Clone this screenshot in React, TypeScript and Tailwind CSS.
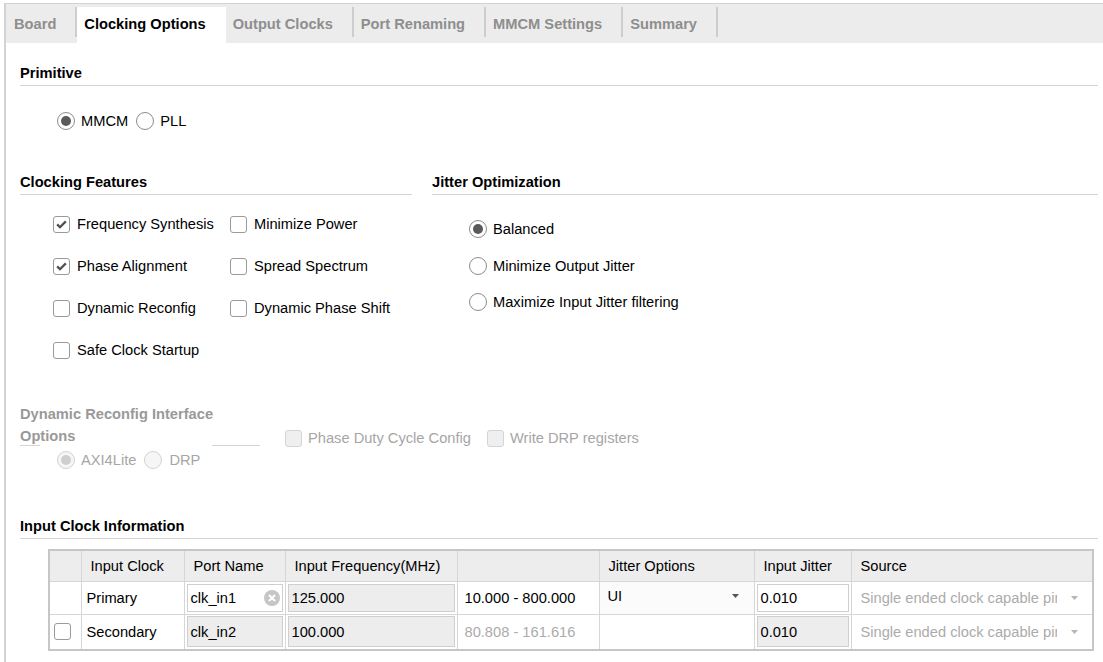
import React from "react";

const tabs = [
	{ label: "Board", active: false },
	{ label: "Clocking Options", active: true },
	{ label: "Output Clocks", active: false },
	{ label: "Port Renaming", active: false },
	{ label: "MMCM Settings", active: false },
	{ label: "Summary", active: false },
];

const Radio = ({ checked, disabled }: { checked?: boolean; disabled?: boolean }) => (
	<span
		className={`flex h-[18px] w-[18px] shrink-0 items-center justify-center rounded-full border-[1.5px] ${
			disabled ? "border-[#d2d2d2] bg-[#f6f6f6]" : "border-[#8c8c8c] bg-white"
		}`}
	>
		{checked && (
			<span
				className={`h-[10px] w-[10px] rounded-full ${disabled ? "bg-[#cfcfcf]" : "bg-[#5a5a5a]"}`}
			/>
		)}
	</span>
);

const Checkbox = ({ checked, disabled }: { checked?: boolean; disabled?: boolean }) => (
	<span
		className={`flex h-[17px] w-[17px] shrink-0 items-center justify-center rounded-[3px] border-[1.5px] ${
			disabled ? "border-[#d4d4d4] bg-[#efefef]" : "border-[#9a9a9a] bg-white"
		}`}
	>
		{checked && (
			<svg width="11" height="9" viewBox="0 0 11 9">
				<path d="M1.2 4.4 L4 7.2 L9.8 1.4" fill="none" stroke="#4f4f4f" strokeWidth="2.3" />
			</svg>
		)}
	</span>
);

const Option = ({
	kind,
	label,
	checked,
	disabled,
	gap = "gap-[6px]",
}: {
	kind: "radio" | "check";
	label: string;
	checked?: boolean;
	disabled?: boolean;
	gap?: string;
}) => (
	<label className={`flex items-center ${gap} ${disabled ? "text-[#a6a6a6]" : "text-black"}`}>
		{kind === "radio" ? <Radio checked={checked} disabled={disabled} /> : <Checkbox checked={checked} disabled={disabled} />}
		<span className="whitespace-nowrap">{label}</span>
	</label>
);

const SectionHeader = ({ title, className = "" }: { title: string; className?: string }) => (
	<div className={`border-b border-[#d4d4d4] pb-[3px] font-bold leading-[18px] ${className}`}>{title}</div>
);

const Caret = ({ color = "#555" }: { color?: string }) => (
	<svg width="7" height="4" viewBox="0 0 7 4" className="shrink-0">
		<path d="M0 0 H7 L3.5 4 Z" fill={color} />
	</svg>
);

const ClearIcon = () => (
	<svg width="16" height="16" viewBox="0 0 16 16" className="shrink-0">
		<circle cx="8" cy="8" r="8" fill="#c6c6c6" />
		<path d="M5 5 L11 11 M11 5 L5 11" stroke="#fff" strokeWidth="2" />
	</svg>
);

const Field = ({
	value,
	editable,
	height,
	clear,
}: {
	value: string;
	editable?: boolean;
	height: string;
	clear?: boolean;
}) => (
	<div
		className={`flex ${height} items-center border border-[#cfcfcf] pl-[3px] pr-[2px] ${
			editable ? "bg-white" : "bg-[#ededed]"
		}`}
	>
		<span className="flex-1">{value}</span>
		{clear && <ClearIcon />}
	</div>
);

const SourceCell = () => (
	<td className="border border-[#d6d6d6] pl-[9px] text-[#ababab]">
		<div className="flex items-center">
			<span className="w-[196px] overflow-hidden whitespace-nowrap">Single ended clock capable pin</span>
			<span className="ml-[14px]">
				<Caret color="#b5b5b5" />
			</span>
		</div>
	</td>
);

export default function App() {
	return (
		<div className="h-[662px] overflow-hidden bg-white font-['Liberation_Sans',Arial,sans-serif] text-[14.67px] text-black">
			<div className="ml-[4px] mt-[3px] h-[700px] border-l-2 border-t border-[#d3d3d3]">
				{/* tab strip */}
				<div className="flex h-[39px] items-start bg-[#ececec] pl-[1px] pt-[3px]">
					{tabs.map((t) =>
						t.active ? (
							<div key={t.label} className="h-[36px] bg-white pl-[7px] pr-[20px] pt-[2px] font-bold leading-[31px] text-black">
								{t.label}
							</div>
						) : (
							<div
								key={t.label}
								className="h-[30px] border-r-2 border-[#cdcdcd] pl-[7px] pr-[19px] pt-[2px] font-bold leading-[31px] text-[#8e8e8e]"
							>
								{t.label}
							</div>
						),
					)}
				</div>

				<div className="pl-[14px] pr-[5px]">
					{/* Primitive */}
					<SectionHeader title="Primitive" className="mt-[21px]" />
					<div className="ml-[37px] mt-[26px] flex h-[18px] items-center gap-[8px]">
						<Option kind="radio" label="MMCM" checked />
						<Option kind="radio" label="PLL" />
					</div>

					{/* Features + Jitter */}
					<div className="mt-[43px] flex gap-[20px]">
						<div className="w-[392px]">
							<SectionHeader title="Clocking Features" />
							<div className="ml-[33px] mt-[8px] grid grid-cols-[177px_1fr]">
								{[
									["Frequency Synthesis", true, "Minimize Power"],
									["Phase Alignment", true, "Spread Spectrum"],
									["Dynamic Reconfig", false, "Dynamic Phase Shift"],
									["Safe Clock Startup", false, ""],
								].map(([a, on, b]) => (
									<React.Fragment key={a as string}>
										<div className="flex h-[42px] items-center">
											<Option kind="check" label={a as string} checked={on as boolean} gap="gap-[7px]" />
										</div>
										<div className="flex h-[42px] items-center">
											{b ? <Option kind="check" label={b as string} gap="gap-[7px]" /> : null}
										</div>
									</React.Fragment>
								))}
							</div>
						</div>
						<div className="flex-1">
							<SectionHeader title="Jitter Optimization" />
							<div className="ml-[37px] mt-[16px] flex flex-col">
								{["Balanced", "Minimize Output Jitter", "Maximize Input Jitter filtering"].map((l, i) => (
									<div key={l} className="flex h-[36.5px] items-center">
										<Option kind="radio" label={l} checked={i === 0} />
									</div>
								))}
							</div>
						</div>
					</div>

					{/* Dynamic reconfig interface */}
					<div className="mt-[32px] flex">
						<div className="w-[240px]">
							<div className="h-[41px] font-bold leading-[22px] text-[#999]">
								Dynamic Reconfig Interface
								<br />
								Options
							</div>
							<div className="mt-[1px] flex">
								<div className="w-[20px] border-t border-[#d4d4d4]" />
								<div className="ml-[172px] w-[48px] border-t border-[#d4d4d4]" />
							</div>
							<div className="ml-[37px] mt-[5px] flex h-[18px] items-center gap-[8px]">
								<Option kind="radio" label="AXI4Lite" checked disabled />
								<Option kind="radio" label="DRP" disabled gap="gap-[7px]" />
							</div>
						</div>
						<div className="ml-[25px] mt-[26px] flex h-[18px] items-center gap-[16px]">
							<Option kind="check" label="Phase Duty Cycle Config" disabled />
							<Option kind="check" label="Write DRP registers" disabled />
						</div>
					</div>

					{/* Input clock information */}
					<SectionHeader title="Input Clock Information" className="mt-[48px]" />
					<table className="ml-[28px] mt-[10px] w-[1044px] table-fixed border-collapse border-2 border-[#c6c6c6]">
						<colgroup>
							<col className="w-[32px]" />
							<col className="w-[103px]" />
							<col className="w-[101px]" />
							<col className="w-[172px]" />
							<col className="w-[142px]" />
							<col className="w-[155px]" />
							<col className="w-[97px]" />
							<col className="w-[242px]" />
						</colgroup>
						<thead>
							<tr className="h-[31px] bg-[#ededed] text-left">
								{["", "Input Clock", "Port Name", "Input Frequency(MHz)", "", "Jitter Options", "Input Jitter", "Source"].map(
									(h, i) => (
										<th key={i} className="border border-[#d6d6d6] pl-[9px] font-normal">
											{h}
										</th>
									),
								)}
							</tr>
						</thead>
						<tbody>
							<tr className="h-[33px]">
								<td className="border border-[#d6d6d6]" />
								<td className="border border-[#d6d6d6] pl-[5px]">Primary</td>
								<td className="border border-[#d6d6d6] px-[2px]">
									<Field value="clk_in1" editable clear height="h-[28px]" />
								</td>
								<td className="border border-[#d6d6d6] px-[2px]">
									<Field value="125.000" height="h-[28px]" />
								</td>
								<td className="border border-[#d6d6d6] pl-[7px]">10.000 - 800.000</td>
								<td className="border border-[#d6d6d6] bg-[#fbfbfb] pl-[8px] pr-[15px]">
									<div className="flex items-center pb-[3px]">
										<span className="flex-1">UI</span>
										<Caret />
									</div>
								</td>
								<td className="border border-[#d6d6d6] px-[2px]">
									<Field value="0.010" editable height="h-[28px]" />
								</td>
								<SourceCell />
							</tr>
							<tr className="h-[36px]">
								<td className="border border-[#d6d6d6] pl-[4px]">
									<Checkbox />
								</td>
								<td className="border border-[#d6d6d6] pl-[5px]">Secondary</td>
								<td className="border border-[#d6d6d6] px-[2px]">
									<Field value="clk_in2" height="h-[31px]" />
								</td>
								<td className="border border-[#d6d6d6] px-[2px]">
									<Field value="100.000" height="h-[31px]" />
								</td>
								<td className="border border-[#d6d6d6] pl-[7px] text-[#ababab]">80.808 - 161.616</td>
								<td className="border border-[#d6d6d6]" />
								<td className="border border-[#d6d6d6] px-[2px]">
									<Field value="0.010" height="h-[31px]" />
								</td>
								<SourceCell />
							</tr>
						</tbody>
					</table>
				</div>
			</div>
		</div>
	);
}
